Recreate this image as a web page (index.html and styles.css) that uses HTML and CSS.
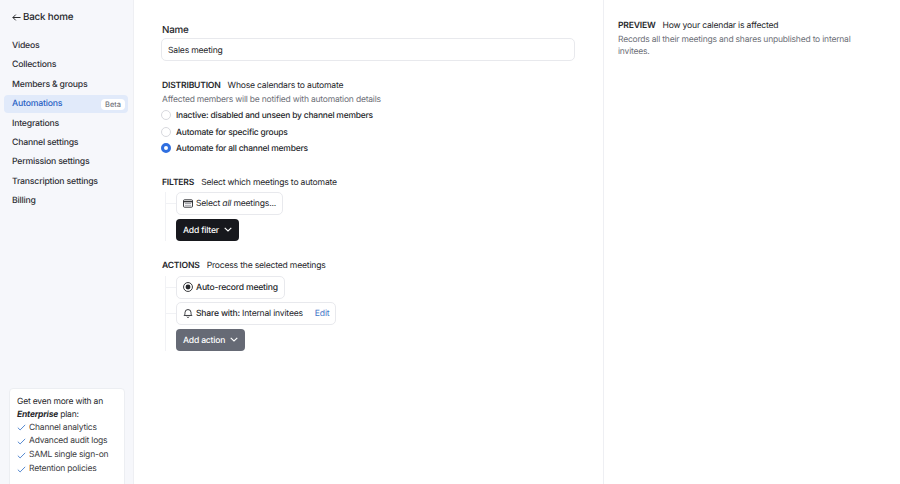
FILE: index.html
```html
<!DOCTYPE html>
<html lang="en">
<head>
    <meta charset="UTF-8">
    <meta name="viewport" content="width=device-width, initial-scale=1.0">
    <title>Automations</title>
    <link rel="stylesheet" href="styles.css">
</head>
<body>
    <div class="app">
        <aside class="sidebar">
            <a class="back-link" href="#">
                <svg width="9" height="9" viewBox="0 0 10 10" fill="none" stroke="currentColor" stroke-width="1.1"><path d="M9.5 5H1M4.2 1.8 1 5l3.2 3.2"/></svg>
                Back home
            </a>
            <nav class="nav">
                <a class="nav-item" href="#">Videos</a>
                <a class="nav-item" href="#">Collections</a>
                <a class="nav-item" href="#">Members &amp; groups</a>
                <a class="nav-item active" href="#">Automations <span class="beta">Beta</span></a>
                <a class="nav-item" href="#">Integrations</a>
                <a class="nav-item" href="#">Channel settings</a>
                <a class="nav-item" href="#">Permission settings</a>
                <a class="nav-item" href="#">Transcription settings</a>
                <a class="nav-item" href="#">Billing</a>
            </nav>
            <div class="upsell">
                <p>Get even more with an <b><i>Enterprise</i></b> plan:</p>
                <ul>
                    <li><svg class="check" viewBox="0 0 10 8"><path d="M.8 4.2 3.4 6.8 9.2 1"/></svg>Channel analytics</li>
                    <li><svg class="check" viewBox="0 0 10 8"><path d="M.8 4.2 3.4 6.8 9.2 1"/></svg>Advanced audit logs</li>
                    <li><svg class="check" viewBox="0 0 10 8"><path d="M.8 4.2 3.4 6.8 9.2 1"/></svg>SAML single sign-on</li>
                    <li><svg class="check" viewBox="0 0 10 8"><path d="M.8 4.2 3.4 6.8 9.2 1"/></svg>Retention policies</li>
                </ul>
            </div>
        </aside>

        <main class="main">
            <label class="name-label" for="name">Name</label>
            <input class="name-input" id="name" type="text" value="Sales meeting">

            <section class="distribution">
                <h2 class="heading"><b>DISTRIBUTION</b>Whose calendars to automate</h2>
                <p class="hint">Affected members will be notified with automation details</p>
                <div class="radio-row"><span class="radio"></span>Inactive: disabled and unseen by channel members</div>
                <div class="radio-row"><span class="radio"></span>Automate for specific groups</div>
                <div class="radio-row"><span class="radio checked"></span>Automate for all channel members</div>
            </section>

            <section class="filters">
                <h2 class="heading"><b>FILTERS</b>Select which meetings to automate</h2>
                <div class="tree">
                    <div class="chip tick">
                        <svg width="10" height="9" viewBox="0 0 11 10" fill="none" stroke="#26272b"><rect x=".5" y=".9" width="10" height="8.2" rx="1"/><path d="M.5 3h10" stroke-width="1.4"/><path d="M2 5h7M2 7h7" stroke="#9a9ba1"/></svg>
                        <span>Select <i>all</i> meetings...</span>
                    </div>
                    <button class="add-btn dark" type="button">Add filter <svg class="chev" viewBox="0 0 8 5"><path d="M.7.8 4 4 7.3.8"/></svg></button>
                </div>
            </section>

            <section class="actions">
                <h2 class="heading"><b>ACTIONS</b>Process the selected meetings</h2>
                <div class="tree">
                    <div class="chip tick">
                        <svg width="10" height="10" viewBox="0 0 11 11" fill="none" stroke="#26272b"><circle cx="5.5" cy="5.5" r="4.9"/><circle cx="5.5" cy="5.5" r="2.7" fill="#26272b" stroke="none"/></svg>
                        <span class="strong">Auto-record meeting</span>
                    </div>
                    <div class="chip tick">
                        <svg width="10" height="10" viewBox="0 0 11 11" fill="none" stroke="#26272b"><path d="M1.2 8.2c.8-.8 1-1.5 1-3.2a3.3 3.3 0 0 1 6.6 0c0 1.7.2 2.4 1 3.2zM4.3 9.6a1.3 1.3 0 0 0 2.4 0"/></svg>
                        <span><span class="strong">Share with:</span> Internal invitees</span>
                        <a class="edit" href="#">Edit</a>
                    </div>
                    <button class="add-btn gray" type="button">Add action <svg class="chev" viewBox="0 0 8 5"><path d="M.7.8 4 4 7.3.8"/></svg></button>
                </div>
            </section>
        </main>

        <aside class="preview">
            <h2 class="heading"><b>PREVIEW</b>How your calendar is affected</h2>
            <p class="hint">Records all their meetings and shares unpublished to internal invitees.</p>
        </aside>
    </div>
</body>
</html>
```

FILE: styles.css
```css
* {
    box-sizing: border-box;
    margin: 0;
    padding: 0;
}

html, body {
    height: 484px;
    overflow: hidden;
}

body {
    background: #fff;
    color: #26272b;
    font-family: 'Inter', sans-serif;
    font-size: 8.6px;
    letter-spacing: -0.2px;
    text-rendering: geometricPrecision;
}

a {
    color: inherit;
    text-decoration: none;
}

.app {
    display: flex;
    height: 484px;
}

/* sidebar */

.sidebar {
    width: 134px;
    flex-shrink: 0;
    background: #f6f7fb;
    border-right: 1px solid #eeeff3;
    padding: 10px 5px 0 4px;
    overflow: hidden;
}

.back-link {
    display: flex;
    align-items: center;
    gap: 2px;
    height: 14px;
    padding-left: 8px;
    font-size: 9.8px;
    font-weight: 500;
}

.nav {
    display: flex;
    flex-direction: column;
    gap: 1.4px;
    margin-top: 13px;
}

.nav-item {
    display: flex;
    align-items: center;
    justify-content: space-between;
    height: 18px;
    padding: 0 3px 0 8px;
    border-radius: 4px;
    font-size: 8.7px;
    font-weight: 500;
    color: #2f3036;
}

.nav-item.active {
    background: #e1eafa;
    color: #2a62c4;
}

.beta {
    background: #fff;
    color: #62646c;
    border-radius: 4px;
    padding: 1px 4px;
    font-size: 7.5px;
    font-weight: 400;
    letter-spacing: 0;
}

.upsell {
    width: 116px;
    height: 120px;
    margin: 178px 0 0 5px;
    padding: 7px;
    background: #fff;
    border: 1px solid #eceef2;
    border-radius: 4px;
    font-size: 8.5px;
    line-height: 12.5px;
}

.upsell ul {
    list-style: none;
}

.upsell li {
    display: flex;
    align-items: center;
    gap: 3px;
    height: 13.7px;
    color: #3a3b41;
}

.check {
    width: 9px;
    height: 7px;
    fill: none;
    stroke: #3e78c9;
    stroke-width: 1;
}

/* main column */

.main {
    width: 470px;
    flex-shrink: 0;
    padding: 24px 28px 0 27px;
    border-right: 1px solid #eeeff3;
}

.name-label {
    display: block;
    padding-left: 1px;
    font-size: 9.8px;
    font-weight: 500;
    line-height: 13px;
}

.name-input {
    display: block;
    width: 414px;
    height: 23px;
    margin-top: 1px;
    padding: 2px 6px 0;
    border: 1px solid #e8e9ed;
    border-radius: 5px;
    color: #26272b;
    font-family: inherit;
    font-size: 8.6px;
    letter-spacing: -0.2px;
    text-rendering: geometricPrecision;
    outline: none;
}

.heading {
    padding-left: 1px;
    font-size: 8.6px;
    font-weight: 400;
    line-height: 13px;
}

.heading b {
    margin-right: 7px;
    font-weight: 600;
}

.hint {
    padding-left: 1px;
    color: #6d6f78;
    font-size: 8.5px;
    line-height: 13px;
}

.distribution {
    margin-top: 19px;
}

.distribution .hint {
    margin: 1px 0;
}

.radio-row {
    display: flex;
    align-items: center;
    gap: 5px;
    height: 16.5px;
    font-size: 8.45px;
    font-weight: 500;
}

.radio {
    width: 10px;
    height: 10px;
    margin-bottom: 2px;
    border: 1px solid #d8d9de;
    border-radius: 50%;
    background: #fff;
}

.radio.checked {
    border: 3.3px solid #2f6fe0;
}

.filters {
    margin-top: 19px;
}

.actions {
    margin-top: 19px;
}

.tree {
    display: flex;
    flex-direction: column;
    align-items: flex-start;
    gap: 4px;
    margin: 2px 0 0 4px;
    padding-left: 10px;
    border-left: 1px solid #f1f2f5;
}

.actions .tree {
    margin-top: 3px;
}

.actions .chip + .chip {
    margin-top: -1px;
}

.chip {
    position: relative;
    display: flex;
    align-items: center;
    gap: 3px;
    height: 23px;
    padding: 0 6px;
    border: 1px solid #e8e9ed;
    border-radius: 5px;
    background: #fff;
}

.chip > span,
.edit {
    padding-top: 1px;
}

.tick::before {
    content: "";
    position: absolute;
    left: -11px;
    top: 10px;
    width: 10px;
    border-top: 1px solid #f1f2f5;
}

.strong {
    font-weight: 500;
}

.edit {
    margin-left: 9px;
    color: #3f76c8;
}

.add-btn {
    display: flex;
    align-items: center;
    gap: 5px;
    height: 22px;
    padding: 2px 7px 0;
    border: none;
    border-radius: 4px;
    color: #fff;
    font-family: inherit;
    font-size: 8.6px;
    font-weight: 500;
    letter-spacing: -0.2px;
    text-rendering: geometricPrecision;
}

.add-btn.dark {
    background: #17181d;
}

.add-btn.gray {
    background: #666a75;
}

.chev {
    width: 8px;
    height: 5px;
    margin-bottom: 2px;
    fill: none;
    stroke: currentColor;
    stroke-width: 1.1;
}

/* preview column */

.preview {
    flex: 1;
    padding: 20px 32px 0 14px;
}

.preview .hint {
    margin-top: 1px;
    padding-left: 0;
    line-height: 12.2px;
}

.preview .heading {
    padding-left: 0;
}
```
